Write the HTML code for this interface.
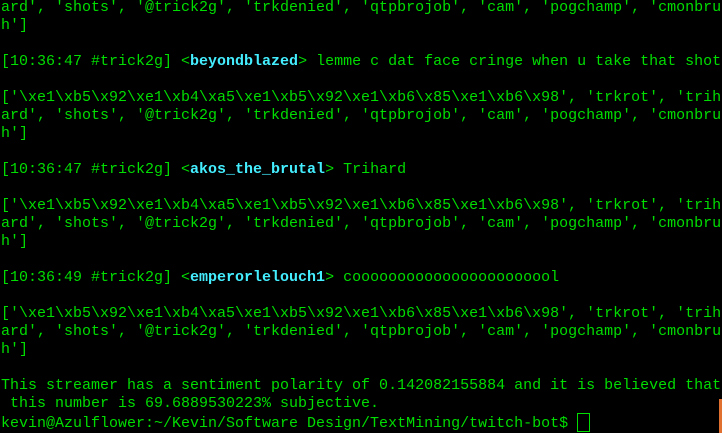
<!DOCTYPE html>
<html><head><style>
html,body{margin:0;padding:0;background:#000;width:722px;height:433px;overflow:hidden}
pre{margin:0;position:absolute;left:1px;top:-1px;font-family:"Liberation Mono",monospace;font-size:15px;line-height:18px;color:#00dd00;white-space:pre;letter-spacing:0}
b{color:#44eeff;font-weight:bold}
.cur{display:inline-block;width:13px;height:19px;border:1px solid #00dd00;box-sizing:border-box;vertical-align:-5px}
.sb{position:absolute;left:719px;top:399px;width:3px;height:34px;background:#e07030}
</style></head><body>
<pre>ard', 'shots', '@trick2g', 'trkdenied', 'qtpbrojob', 'cam', 'pogchamp', 'cmonbru
h']

[10:36:47 #trick2g] &lt;<b>beyondblazed</b>&gt; lemme c dat face cringe when u take that shot

['\xe1\xb5\x92\xe1\xb4\xa5\xe1\xb5\x92\xe1\xb6\x85\xe1\xb6\x98', 'trkrot', 'trih
ard', 'shots', '@trick2g', 'trkdenied', 'qtpbrojob', 'cam', 'pogchamp', 'cmonbru
h']

[10:36:47 #trick2g] &lt;<b>akos_the_brutal</b>&gt; Trihard

['\xe1\xb5\x92\xe1\xb4\xa5\xe1\xb5\x92\xe1\xb6\x85\xe1\xb6\x98', 'trkrot', 'trih
ard', 'shots', '@trick2g', 'trkdenied', 'qtpbrojob', 'cam', 'pogchamp', 'cmonbru
h']

[10:36:49 #trick2g] &lt;<b>emperorlelouch1</b>&gt; cooooooooooooooooooooool

['\xe1\xb5\x92\xe1\xb4\xa5\xe1\xb5\x92\xe1\xb6\x85\xe1\xb6\x98', 'trkrot', 'trih
ard', 'shots', '@trick2g', 'trkdenied', 'qtpbrojob', 'cam', 'pogchamp', 'cmonbru
h']

This streamer has a sentiment polarity of 0.142082155884 and it is believed that
 this number is 69.6889530223% subjective.
kevin@Azulflower:~/Kevin/Software Design/TextMining/twitch-bot$ <span class="cur"></span></pre>
<div class="sb"></div>
</body></html>
